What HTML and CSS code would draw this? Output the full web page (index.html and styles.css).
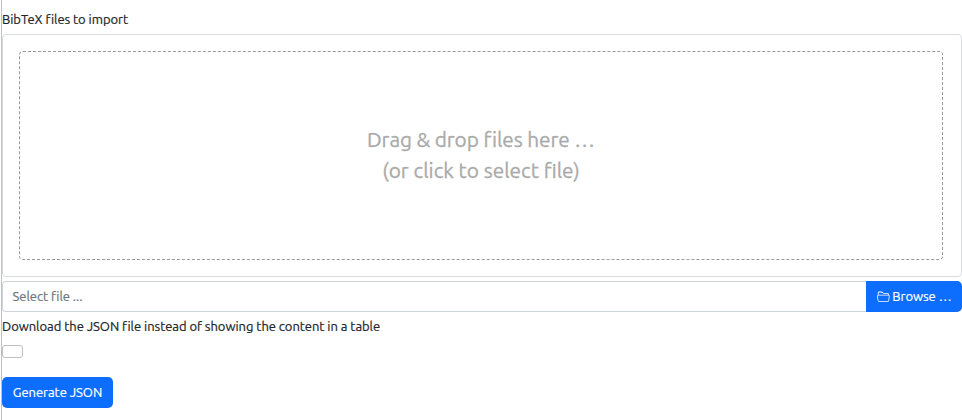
FILE: index.html
```html
<!DOCTYPE html>
<html lang="en">
<head>
<meta charset="utf-8">
<title>BibTeX import</title>
<link rel="stylesheet" href="styles.css">
</head>
<body>
<form class="import-form">
  <label class="label">BibTeX files to import</label>
  <div class="preview">
    <div class="drop-zone">Drag &amp; drop files here …<br><span class="hint">(or click to select file)</span></div>
  </div>
  <div class="file-row">
    <div class="caption">Select file ...</div>
    <div class="browse">
      <svg class="folder" viewBox="0 0 16 16" fill="currentColor"><path d="M1 3.5A1.5 1.5 0 0 1 2.5 2h2.764c.958 0 1.76.56 2.311 1.184C7.985 3.648 8.48 4 9 4h4.5A1.5 1.5 0 0 1 15 5.5v.64c.57.265.94.876.856 1.546l-.64 5.124A2.5 2.5 0 0 1 12.733 15H3.266a2.5 2.5 0 0 1-2.481-2.19l-.64-5.124A1.5 1.5 0 0 1 1 6.14V3.5zM2 6h12v-.5a.5.5 0 0 0-.5-.5H9c-.964 0-1.71-.629-2.174-1.154C6.374 3.334 5.82 3 5.264 3H2.5a.5.5 0 0 0-.5.5V6zm-.367 1a.5.5 0 0 0-.496.562l.64 5.124A1.5 1.5 0 0 0 3.266 14h9.468a1.5 1.5 0 0 0 1.489-1.314l.64-5.124A.5.5 0 0 0 14.367 7H1.633z"/></svg>
      <span>Browse …</span>
    </div>
  </div>
  <label class="label download">Download the JSON file instead of showing the content in a table</label>
  <div class="check"></div>
  <div class="submit">Generate JSON</div>
</form>
</body>
</html>
```

FILE: styles.css
```css
* { box-sizing: border-box; }
body {
  margin: 0;
  height: 420px;
  overflow: hidden;
  background: #fff;
  color: #212529;
  font: 400 13px/20px Ubuntu, "Noto Sans", sans-serif;
  letter-spacing: -0.04px;
  white-space: nowrap;
}
.import-form { height: 420px; margin-left: 1px; border-left: 1px solid #bfc1c3; padding-top: 9px; }
.label { display: block; height: 20px; -webkit-text-stroke: 0.2px currentColor; }
.preview { margin-top: 5px; height: 243px; border: 1px solid #d9dcdf; border-radius: 4px; padding: 16px 18px 16px 16px; }
.drop-zone {
  height: 209px;
  border: 1px dashed #999;
  border-radius: 4px;
  padding-top: 72px;
  text-align: center;
  color: #aaa;
  font-size: 20.8px;
  line-height: 31px;
  letter-spacing: -0.09px;
  -webkit-text-stroke: 0.3px currentColor;
}
.hint { letter-spacing: 0; }
.file-row { display: flex; height: 31px; margin-top: 4px; }
.caption { flex: 1; border: 1px solid #ced4da; border-right: 0; border-radius: 4px 0 0 4px; padding: 4px 9.5px; color: #6c757d; -webkit-text-stroke: 0.2px currentColor; }
.browse { display: flex; align-items: center; width: 96px; gap: 2.5px; padding: 0 0 1px 11px; background: #0d6efd; color: #fff; border-radius: 0 5px 5px 0; -webkit-text-stroke: 0.2px currentColor; }
.folder { width: 12.8px; height: 12.8px; }
.download { margin-top: 4px; }
.check { width: 21px; height: 13px; margin-top: 9px; border: 1px solid #bfbfbf; border-radius: 3px; }
.submit { width: 111px; height: 31px; margin-top: 19px; padding: 5px 0; text-align: center; background: #0d6efd; color: #fff; border-radius: 5px; -webkit-text-stroke: 0.2px currentColor; }
```
